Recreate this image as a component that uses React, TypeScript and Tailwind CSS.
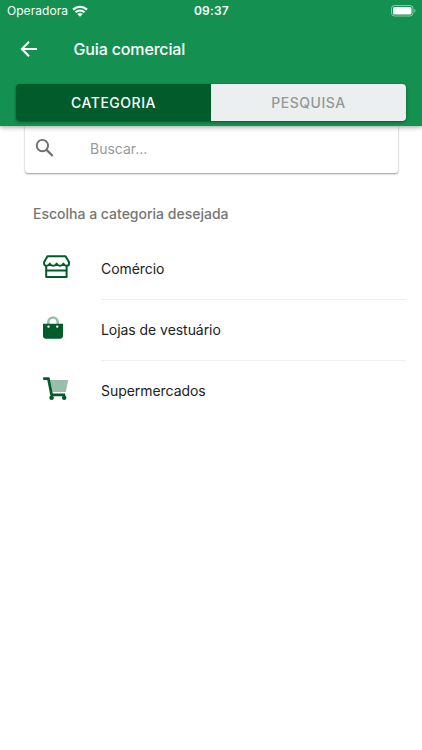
import React, { useState } from "react";

type Category = {
  id: string;
  name: string;
  icon: React.ReactNode;
};

const categories: Category[] = [
  { id: "comercio", name: "Comércio", icon: <StoreIcon /> },
  { id: "vestuario", name: "Lojas de vestuário", icon: <BagIcon /> },
  { id: "supermercados", name: "Supermercados", icon: <CartIcon /> },
];

export default function App() {
  const [tab, setTab] = useState<"categoria" | "pesquisa">("categoria");
  const [search, setSearch] = useState("");

  return (
    <div className="flex h-[750px] w-full flex-col overflow-hidden bg-white font-['Inter',sans-serif]">
      <header className="relative z-10 h-[126px] shrink-0 bg-[#149150] shadow-[0_1px_5px_rgba(0,0,0,0.4)]">
        <StatusBar />
        <div className="flex h-[54px] items-center pl-5 text-white">
          <button aria-label="Voltar" className="w-[53.5px]">
            <BackIcon />
          </button>
          <h1 className="text-[16px] font-[450] leading-5 tracking-[-0.15px]">
            Guia comercial
          </h1>
        </div>
        <div className="mx-4 mt-2 flex h-[37px] overflow-hidden rounded-[4px] shadow-[0_1px_3px_rgba(0,0,0,0.45)]">
          <Tab
            label="CATEGORIA"
            active={tab === "categoria"}
            onClick={() => setTab("categoria")}
          />
          <Tab
            label="PESQUISA"
            active={tab === "pesquisa"}
            onClick={() => setTab("pesquisa")}
          />
        </div>
      </header>

      <main>
        <div className="ml-[25px] mr-6 flex h-[47px] items-center rounded-b-[3px] bg-white pb-px pl-[10px] shadow-[0_1px_2px_rgba(0,0,0,0.42)]">
          <SearchIcon />
          <input
            className="ml-[35px] w-60 bg-transparent text-[14px] leading-5 text-[#444] outline-none placeholder:text-[#999]"
            placeholder="Buscar..."
            value={search}
            onChange={(e) => setSearch(e.target.value)}
          />
        </div>

        <h2 className="ml-[33px] mt-[31px] text-[14px] font-medium leading-5 text-[#757575]">
          Escolha a categoria desejada
        </h2>

        <ul className="mt-[15px]">
          {categories.map((category, i) => (
            <li key={category.id} className="flex h-[61px] pl-[43px] pr-4">
              <span className="w-[58px] pt-[16px]">{category.icon}</span>
              <span
                className={
                  i < categories.length - 1
                    ? "flex flex-1 items-center border-b border-[#efefef] pb-[2px] text-[14px] tracking-[-0.05px] text-[#222]"
                    : "flex flex-1 items-center border-b border-transparent pb-[2px] text-[14px] tracking-[-0.05px] text-[#222]"
                }
              >
                {category.name}
              </span>
            </li>
          ))}
        </ul>
      </main>
    </div>
  );
}

function StatusBar() {
  return (
    <div className="grid h-[22px] grid-cols-3 items-center pl-[7px] pr-[6px] text-white">
      <div className="flex items-center gap-[4px]">
        <span className="text-[12px] leading-4 tracking-[0.05px]">Operadora</span>
        <WifiIcon />
      </div>
      <span className="text-center text-[12px] font-semibold leading-4 tracking-[0.2px]">
        09:37
      </span>
      <div className="flex justify-end">
        <BatteryIcon />
      </div>
    </div>
  );
}

function Tab({
  label,
  active,
  onClick,
}: {
  label: string;
  active: boolean;
  onClick: () => void;
}) {
  return (
    <button
      onClick={onClick}
      className={
        active
          ? "flex-1 bg-[#015b2b] text-[14px] font-[450] tracking-[0.5px] text-white"
          : "flex-1 bg-[#ebefef] text-[14px] font-[450] tracking-[0.5px] text-[#959898]"
      }
    >
      {label}
    </button>
  );
}

function WifiIcon() {
  return (
    <svg className="mb-px" width="16" height="12" viewBox="0 0 16 12" fill="none" stroke="currentColor" strokeWidth="2.2">
      <path d="M1 4.6C5 .8 11 .8 15 4.6" />
      <path d="M3.5 7.3C6.1 4.9 9.9 4.9 12.5 7.3" />
      <path d="M8 11.8 5.3 9.1C7 7.7 9 7.7 10.7 9.1Z" fill="currentColor" stroke="none" />
    </svg>
  );
}

function BatteryIcon() {
  return (
    <svg width="25" height="12" viewBox="0 0 25 12" fill="none">
      <rect x=".5" y=".5" width="21.5" height="10.5" rx="3" stroke="#fff" strokeOpacity=".5" />
      <rect x="2" y="2" width="18.5" height="7.5" rx="1.5" fill="#fff" />
      <path d="M23.3 4v3.6c.8-.3 1.2-1 1.2-1.8s-.4-1.5-1.2-1.8Z" fill="#fff" fillOpacity=".5" />
    </svg>
  );
}

function BackIcon() {
  return (
    <svg width="17" height="16" viewBox="0 0 17 16" fill="none" stroke="currentColor" strokeWidth="2">
      <path d="M9 .8 1.9 8 9 15.2M1.9 8H17" />
    </svg>
  );
}

function SearchIcon() {
  return (
    <svg className="mb-[2px]" width="20" height="20" viewBox="0 0 20 20" fill="none" stroke="#6e6e6e" strokeWidth="1.9">
      <circle cx="7.4" cy="7.6" r="5.7" />
      <path d="m11.6 11.9 6.1 6.1" strokeWidth="2.2" />
    </svg>
  );
}

function StoreIcon() {
  return (
    <svg width="28" height="24" viewBox="0 0 28 24" fill="none" stroke="#015b2b" strokeWidth="2" strokeLinejoin="round">
      <path d="M4.5 1.2h18L26 7v1.8c0 1.2-.9 2-2.2 2-1.7 0-2.8-.9-3.4-2.2-.6 1.3-1.9 2.2-3.4 2.2s-2.8-.9-3.4-2.2c-.6 1.3-1.9 2.2-3.4 2.2s-2.8-.9-3.4-2.2c-.6 1.3-1.7 2.2-3.4 2.2-1.2 0-2.3-.8-2.3-2V7Z" />
      <path d="M3.2 10.8V22h20.4V10.8M3.2 15.6h20.4" />
    </svg>
  );
}

function BagIcon() {
  return (
    <svg width="21" height="24" viewBox="0 0 21 24" fill="none">
      <path d="M5.3 9V6.2a4.7 4.7 0 0 1 9.4 0V9" stroke="#99bea9" strokeWidth="2.6" />
      <path d="M0 7.8h20v12a3 3 0 0 1-3 3H3a3 3 0 0 1-3-3Z" fill="#015b2b" />
      <circle cx="5.5" cy="10.6" r="1.2" fill="#fff" />
      <circle cx="14.2" cy="10.6" r="1.2" fill="#fff" />
    </svg>
  );
}

function CartIcon() {
  return (
    <svg width="26" height="24" viewBox="0 0 26 24" fill="none">
      <path d="M7 3h18.2l-2.4 12H9.5Z" fill="#99bea9" />
      <path d="M.2 1.6h5.2l3.2 16.2h13.6" stroke="#015b2b" strokeWidth="2.8" strokeLinejoin="round" />
      <circle cx="8.6" cy="20.7" r="2.3" fill="#015b2b" />
      <circle cx="21.2" cy="20.7" r="2.3" fill="#015b2b" />
    </svg>
  );
}
